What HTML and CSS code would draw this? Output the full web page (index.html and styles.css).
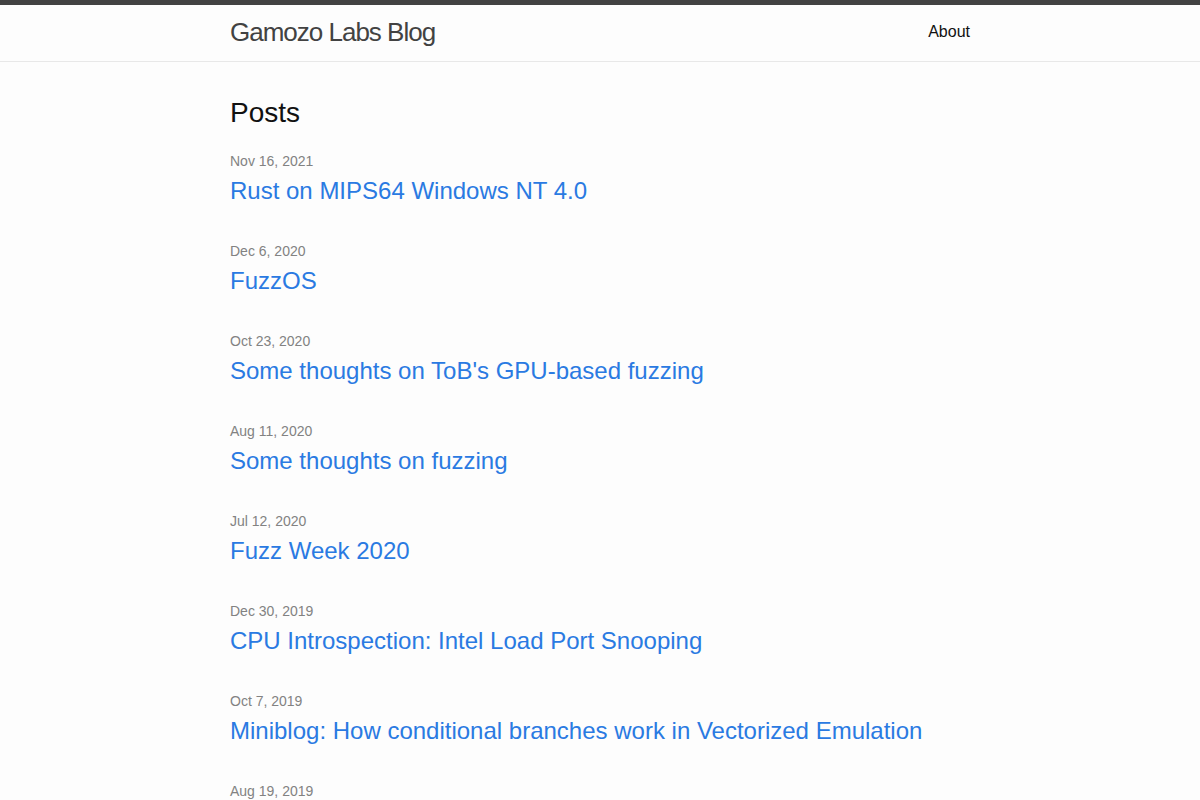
FILE: index.html
```html
<!DOCTYPE html>
<html lang="en">
<head>
  <meta charset="UTF-8">
  <meta name="viewport" content="width=device-width, initial-scale=1.0">
  <title>Gamozo Labs Blog</title>
  <link rel="stylesheet" href="styles.css">
</head>
<body>

  <header class="site-header">
    <div class="wrapper header-row">
      <a class="site-title" href="#">Gamozo Labs Blog</a>
      <nav class="site-nav">
        <a class="page-link" href="#">About</a>
      </nav>
    </div>
  </header>

  <main class="page-content">
    <div class="wrapper">
      <h2 class="post-list-heading">Posts</h2>
      <ul class="post-list">
        <li>
          <span class="post-meta">Nov 16, 2021</span>
          <h3><a class="post-link" href="#">Rust on MIPS64 Windows NT 4.0</a></h3>
        </li>
        <li>
          <span class="post-meta">Dec 6, 2020</span>
          <h3><a class="post-link" href="#">FuzzOS</a></h3>
        </li>
        <li>
          <span class="post-meta">Oct 23, 2020</span>
          <h3><a class="post-link" href="#">Some thoughts on ToB's GPU-based fuzzing</a></h3>
        </li>
        <li>
          <span class="post-meta">Aug 11, 2020</span>
          <h3><a class="post-link" href="#">Some thoughts on fuzzing</a></h3>
        </li>
        <li>
          <span class="post-meta">Jul 12, 2020</span>
          <h3><a class="post-link" href="#">Fuzz Week 2020</a></h3>
        </li>
        <li>
          <span class="post-meta">Dec 30, 2019</span>
          <h3><a class="post-link" href="#">CPU Introspection: Intel Load Port Snooping</a></h3>
        </li>
        <li>
          <span class="post-meta">Oct 7, 2019</span>
          <h3><a class="post-link" href="#">Miniblog: How conditional branches work in Vectorized Emulation</a></h3>
        </li>
        <li>
          <span class="post-meta">Aug 19, 2019</span>
          <h3><a class="post-link" href="#">Sushi Roll: A CPU research kernel with minimal noise for cycle-by-cycle micro-architectural introspection</a></h3>
        </li>
        <li>
          <span class="post-meta">Oct 14, 2018</span>
          <h3><a class="post-link" href="#">Vectorized Emulation: Hardware accelerated taint tracking at 2 trillion instructions per second</a></h3>
        </li>
      </ul>
    </div>
  </main>

</body>
</html>
```

FILE: styles.css
```css
/* Base */
body {
  margin: 0;
  padding: 0;
  font-family: "Liberation Sans", Arial, sans-serif;
  font-size: 16px;
  line-height: 1.5;
  color: #111;
  background-color: #fdfdfd;
}

a {
  color: #2a7ae2;
  text-decoration: none;
}

.wrapper {
  max-width: 740px;
  margin: 0 auto;
  padding: 0 30px;
}

/* Header */
.site-header {
  border-top: 5px solid #424242;
  border-bottom: 1px solid #e8e8e8;
  min-height: 56px;
}

.header-row {
  display: flex;
  justify-content: space-between;
  align-items: flex-start;
}

.site-title {
  font-size: 26px;
  font-weight: 300;
  line-height: 54px;
  letter-spacing: -1px;
  color: #424242;
}

.site-nav {
  line-height: 54px;
}

.page-link {
  color: #111;
  margin-left: 20px;
}

/* Post list */
.page-content {
  padding: 30px 0;
}

.post-list-heading {
  font-size: 28px;
  font-weight: 400;
  margin: 0 0 15px;
}

.post-list {
  list-style: none;
  margin: 0;
  padding: 0;
}

.post-list > li {
  margin-bottom: 30px;
}

.post-meta {
  font-size: 14px;
  color: #828282;
}

.post-list h3 {
  margin: 0;
  font-weight: 400;
}

.post-link {
  display: block;
  font-size: 24px;
}
```
